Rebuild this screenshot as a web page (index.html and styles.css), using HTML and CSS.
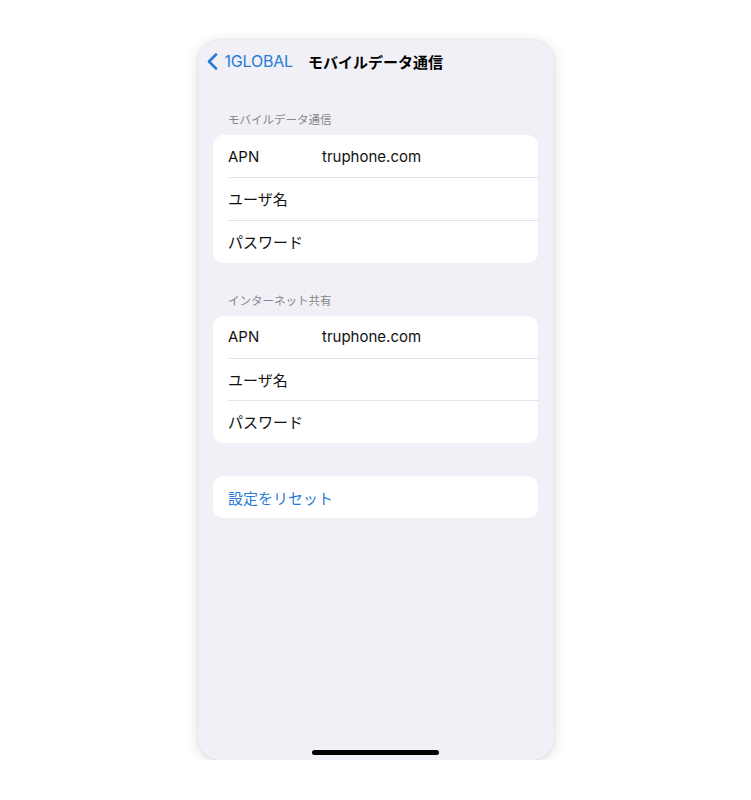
FILE: index.html
```html
<!DOCTYPE html>
<html lang="ja">
<head>
<meta charset="UTF-8">
<meta name="viewport" content="width=device-width, initial-scale=1.0">
<title>モバイルデータ通信</title>
<link rel="stylesheet" href="styles.css">
</head>
<body>
  <div class="phone">
    <!-- Navigation bar -->
    <div class="nav">
      <a class="back" href="#">
        <svg width="11" height="17" viewBox="0 0 11 17"><path d="M9 1.5 L2 8.5 L9 15.5" fill="none" stroke="currentColor" stroke-width="2.6" stroke-linecap="round" stroke-linejoin="round"/></svg>
        <span>1GLOBAL</span>
      </a>
      <div class="title">モバイルデータ通信</div>
    </div>

    <div class="section-header">モバイルデータ通信</div>
    <div class="group">
      <div class="row"><div class="label">APN</div><div class="value">truphone.com</div></div>
      <div class="row"><div class="label">ユーザ名</div><div class="value"></div></div>
      <div class="row"><div class="label">パスワード</div><div class="value"></div></div>
    </div>

    <div class="section-header">インターネット共有</div>
    <div class="group">
      <div class="row"><div class="label">APN</div><div class="value">truphone.com</div></div>
      <div class="row"><div class="label">ユーザ名</div><div class="value"></div></div>
      <div class="row"><div class="label">パスワード</div><div class="value"></div></div>
    </div>

    <div class="group plain">
      <div class="row"><a class="action" href="#">設定をリセット</a></div>
    </div>

    <div class="home-bar"></div>
  </div>
</body>
</html>
```

FILE: styles.css
```css
body {
  margin: 0;
  padding: 40px 0 0;
  background: #fff;
  font-family: "Inter", "Noto Sans CJK JP", sans-serif;
  color: #111;
}

a {
  text-decoration: none;
}

.phone {
  width: 356px;
  height: 720px;
  margin: 0 auto;
  background: #f0f0f6;
  border-radius: 22px;
  box-shadow: 0 2px 14px rgba(0, 0, 0, 0.14), 0 0 0 1px rgba(0, 0, 0, 0.03);
  display: flex;
  flex-direction: column;
  position: relative;
  overflow: hidden;
}

/* top navigation */
.nav {
  height: 42px;
  display: flex;
  align-items: center;
  position: relative;
}

.back {
  display: flex;
  align-items: center;
  gap: 7px;
  padding-left: 9px;
  color: #2a7bd6;
  font-size: 16px;
  letter-spacing: -0.2px;
  position: relative;
  z-index: 1;
}

.back svg {
  display: block;
}

.title {
  position: absolute;
  left: 0;
  right: 0;
  text-align: center;
  font-size: 15px;
  font-weight: 700;
  color: #000;
}

/* grouped list */
.section-header {
  margin-top: 30px;
  padding: 0 15px 7px 30.5px;
  font-size: 11.5px;
  line-height: 16px;
  color: #86868b;
}

.group {
  margin: 0 15.5px;
  background: #fff;
  border-radius: 10px;
  overflow: hidden;
}

.group.plain {
  margin-top: 33px;
}

.row {
  height: 42.5px;
  display: flex;
  align-items: center;
  padding-left: 15px;
  font-size: 15px;
  position: relative;
}

.row + .row::before {
  content: "";
  position: absolute;
  top: -0.5px;
  left: 15px;
  right: 0;
  border-top: 1px solid #e3e3e8;
}

.plain .row {
  height: 42px;
}

.label {
  width: 94px;
}

.value {
  color: #111;
}

.action {
  color: #2a7bd6;
}

.home-bar {
  margin: auto auto 5px;
  width: 127px;
  height: 5px;
  border-radius: 3px;
  background: #000;
}
```
